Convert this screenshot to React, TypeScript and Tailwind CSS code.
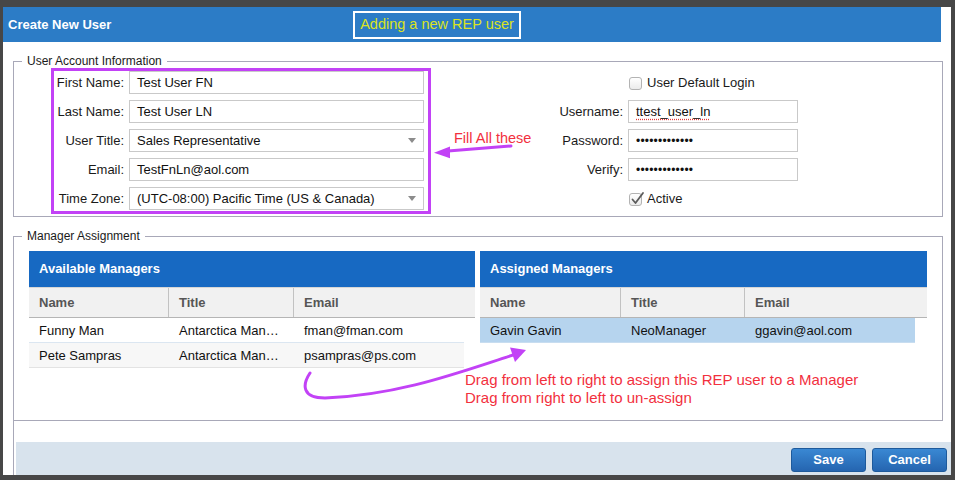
import React from "react";

function Field({ label, value, select }: { label: string; value: string; select?: boolean }) {
  return (
    <div className="flex h-[23px] items-center">
      <div className="w-[70px] text-right text-[13px] leading-[23px] text-[#1a1a1a]">{label}</div>
      <div className="ml-[5px] flex h-[23px] w-[295px] items-center border border-[#c9c9c9] bg-white pl-[7px] text-[13px] text-[#111]">
        <span>{value}</span>
        {select && (
          <span className="ml-auto mr-[7px] h-0 w-0 border-l-[4px] border-r-[4px] border-t-[5px] border-l-transparent border-r-transparent border-t-[#8c8c8c]" />
        )}
      </div>
    </div>
  );
}

function RightField({ label, children }: { label: string; children: React.ReactNode }) {
  return (
    <div className="flex h-[23px] items-center">
      <div className="w-[100px] text-right text-[13px] leading-[23px] text-[#1a1a1a]">{label}</div>
      <div className="ml-[5px] flex h-[23px] w-[170px] items-center border border-[#c9c9c9] bg-white pl-[7px] text-[13px] text-[#111]">
        {children}
      </div>
    </div>
  );
}

function Box({ checked }: { checked?: boolean }) {
  return (
    <span className="relative inline-block h-[13px] w-[13px] rounded-[3px] border border-[#b3b3b3] bg-linear-to-b from-white to-[#ebebeb]">
      {checked && (
        <svg className="absolute left-[0px] top-[-3px]" width="15" height="15" viewBox="0 0 15 15">
          <path d="M2.5 8.5 L5.5 12 L13 2" fill="none" stroke="#5c5c5c" strokeWidth="1.8" strokeLinecap="round" strokeLinejoin="round" />
        </svg>
      )}
    </span>
  );
}

type Row = { name: string; title: string; email: string };

function Panel({
  title,
  widthCls,
  c1,
  c2,
  rows,
  assigned,
}: {
  title: string;
  widthCls: string;
  c1: string;
  c2: string;
  rows: Row[];
  assigned?: boolean;
}) {
  return (
    <div className={`${widthCls} flex flex-col`}>
      <div className="flex h-[36px] items-center bg-[#1769c2] pl-[10px] text-[13px] font-bold text-white">{title}</div>
      <div className="flex h-[31px] border-t border-b border-t-[#d6d6d6] border-b-[#b5b5b5] bg-[#f1f1f1] text-[13px] font-bold text-[#565656]">
        <div className={`${c1} flex items-center border-r border-[#c2c2c2] pl-[10px]`}>Name</div>
        <div className={`${c2} flex items-center border-r border-[#c2c2c2] pl-[10px]`}>Title</div>
        <div className="flex flex-1 items-center pl-[10px]">Email</div>
      </div>
      {rows.map((r, i) => (
        <div
          key={r.name}
          className={
            assigned
              ? "flex h-[25px] w-[435px] items-center border-b border-[#c8ddf0] bg-[#b6d4ee] pt-[2px] text-[13px] text-[#111]"
              : i % 2 === 0
              ? "flex h-[25px] w-[435px] items-center border-b border-[#dbe6f1] bg-white pt-[2px] text-[13px] text-[#111]"
              : "flex h-[25px] w-[435px] items-center border-b border-[#e3e3e3] bg-[#f7f7f7] pt-[2px] text-[13px] text-[#111]"
          }
        >
          <div className={`${c1} pl-[10px]`}>{r.name}</div>
          <div className={`${c2} pl-[10px]`}>{r.title}</div>
          <div className="flex-1 pl-[10px]">{r.email}</div>
        </div>
      ))}
    </div>
  );
}

export default function App() {
  return (
    <div className="relative h-[480px] w-[955px] bg-[#474747] pb-[5px] pl-[3px] pr-[4px] pt-[7px] font-['Liberation_Sans',Arial,Helvetica,sans-serif]">
      <div className="flex h-full w-full flex-col bg-white">
        {/* Header */}
        <div className="mr-[10px] flex h-[35px] items-center bg-[#2c7cc6]">
          <div className="w-[350px] pl-[5px] text-[13px] font-bold text-white">Create New User</div>
          <div className="flex h-[28px] w-[168px] items-center justify-center border-2 border-white text-[14.5px] text-[#dbe322]">
            Adding a new REP user
          </div>
        </div>

        {/* User Account Information */}
        <fieldset className="ml-[10px] mr-[8px] mt-[12px] border border-[#a8a8b8]">
          <legend className="ml-[8px] px-[5px] text-[12px] leading-[14px] text-[#1a1a1a]">User Account Information</legend>
          <div className="flex items-start pb-[2px]">
            <div className="ml-[37px] flex w-[380px] flex-col gap-[6px] border-[3px] border-[#c242f6] pb-[1px] pr-[4px]">
              <Field label="First Name:" value="Test User FN" />
              <Field label="Last Name:" value="Test User LN" />
              <Field label="User Title:" value="Sales Representative" select />
              <Field label="Email:" value="TestFnLn@aol.com" />
              <Field label="Time Zone:" value="(UTC-08:00) Pacific Time (US & Canada)" select />
            </div>
            <div className="ml-auto mr-[144px] flex flex-col gap-[6px] pt-[3px]">
              <div className="flex h-[23px] items-center pl-[106px] pt-[1px]">
                <Box />
                <span className="ml-[5px] text-[13px] text-[#1a1a1a]">User Default Login</span>
              </div>
              <RightField label="Username:">
                <span className="underline decoration-[#e23b3b] decoration-dotted underline-offset-[3px]">ttest_user_ln</span>
              </RightField>
              <RightField label="Password:">
                <span className="text-[12px] tracking-[0.2px]">•••••••••••••</span>
              </RightField>
              <RightField label="Verify:">
                <span className="text-[12px] tracking-[0.2px]">•••••••••••••</span>
              </RightField>
              <div className="flex h-[23px] items-center pl-[106px] pt-[1px]">
                <Box checked />
                <span className="ml-[5px] text-[13px] text-[#1a1a1a]">Active</span>
              </div>
            </div>
          </div>
        </fieldset>

        {/* Manager Assignment */}
        <fieldset className="ml-[10px] mr-[8px] mt-[12px] border border-[#a8a8b8]">
          <legend className="ml-[8px] px-[5px] text-[12px] leading-[14px] text-[#1a1a1a]">Manager Assignment</legend>
          <div className="flex h-[177px] gap-[5px] pl-[15px] pt-[8px]">
            <Panel
              title="Available Managers"
              widthCls="w-[446px]"
              c1="w-[140px]"
              c2="w-[125px]"
              rows={[
                { name: "Funny Man", title: "Antarctica Man…", email: "fman@fman.com" },
                { name: "Pete Sampras", title: "Antarctica Man…", email: "psampras@ps.com" },
              ]}
            />
            <Panel
              title="Assigned Managers"
              widthCls="w-[447px]"
              c1="w-[141px]"
              c2="w-[124px]"
              rows={[{ name: "Gavin Gavin", title: "NeoManager", email: "ggavin@aol.com" }]}
              assigned
            />
          </div>
        </fieldset>

        {/* Footer */}
        <div className="ml-[10px] h-[54px] border-l border-[#a8a8b8] pl-[2px] pt-[21px]">
          <div className="flex h-[33px] justify-end gap-[6px] bg-[#d8e3ed] pr-[4px] pt-[6px]">
            <button className="h-[24px] w-[75px] rounded-[3px] border border-[#1d5a9c] bg-linear-to-b from-[#3a88d3] to-[#2565b0] text-[13px] font-bold text-white">
              Save
            </button>
            <button className="h-[24px] w-[75px] rounded-[3px] border border-[#1d5a9c] bg-linear-to-b from-[#3a88d3] to-[#2565b0] text-[13px] font-bold text-white">
              Cancel
            </button>
          </div>
        </div>
      </div>

      {/* Annotations */}
      <div className="absolute left-[454px] top-[130px] text-[14.5px] leading-[16px] text-[#f2303e]">Fill All these</div>
      <div className="absolute left-[465px] top-[371px] text-[15px] leading-[18px] text-[#f2303e]">
        <div>Drag from left to right to assign this REP user to a Manager</div>
        <div>Drag from right to left to un-assign</div>
      </div>
      <svg className="pointer-events-none absolute left-0 top-0" width="955" height="480" viewBox="0 0 955 480">
        <path d="M511 146 L448 151" fill="none" stroke="#c242f6" strokeWidth="3" strokeLinecap="round" />
        <polygon points="434,152.7 450,146.5 450,158.3" fill="#c242f6" />
        <path
          d="M310 373 C302 385, 302 398, 325 398 C400 395, 460 372, 513 355"
          fill="none"
          stroke="#c242f6"
          strokeWidth="3"
          strokeLinecap="round"
        />
        <polygon points="526,350 510,347.5 515,362" fill="#c242f6" />
      </svg>
    </div>
  );
}
